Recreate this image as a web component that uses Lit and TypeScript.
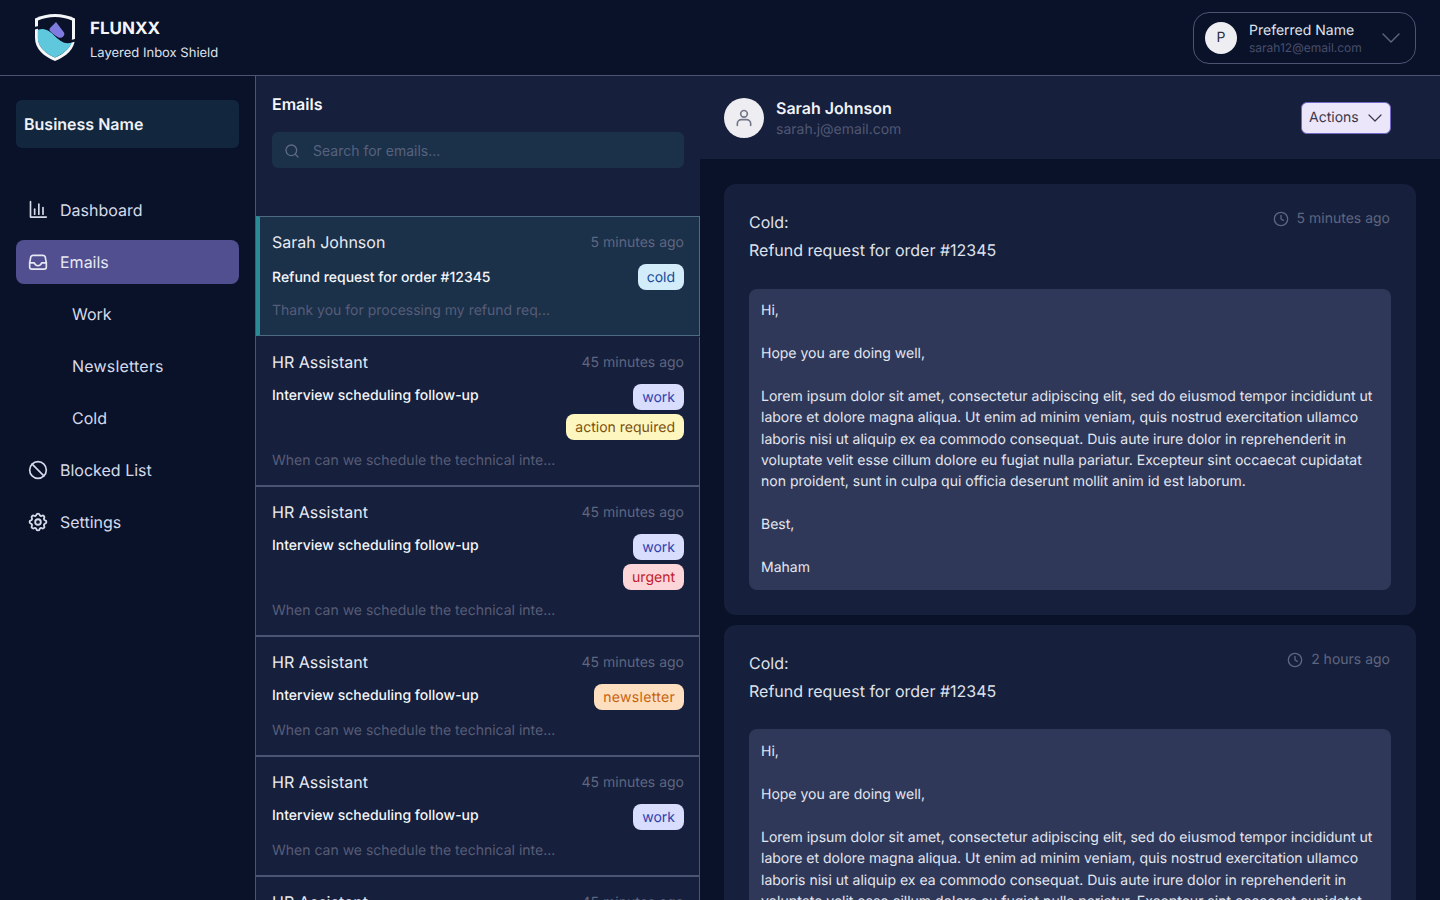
import {css, html, LitElement, svg} from "lit"
import {customElement} from "lit/decorators.js"

const LOREM = `Hi,

Hope you are doing well,

Lorem ipsum dolor sit amet, consectetur adipiscing elit, sed do eiusmod tempor incididunt ut labore et dolore magna aliqua. Ut enim ad minim veniam, quis nostrud exercitation ullamco laboris nisi ut aliquip ex ea commodo consequat. Duis aute irure dolor in reprehenderit in voluptate velit esse cillum dolore eu fugiat nulla pariatur. Excepteur sint occaecat cupidatat non proident, sunt in culpa qui officia deserunt mollit anim id est laborum.

Best,

Maham`

const HR = {
    name: 'HR Assistant',
    time: '45 minutes ago',
    subject: 'Interview scheduling follow-up',
    snippet: 'When can we schedule the technical inte...',
}

const EMAILS = [
    {
        name: 'Sarah Johnson',
        time: '5 minutes ago',
        subject: 'Refund request for order #12345',
        snippet: 'Thank you for processing my refund req...',
        tags: ['cold'],
        selected: true,
    },
    {...HR, tags: ['work', 'action required']},
    {...HR, tags: ['work', 'urgent']},
    {...HR, tags: ['newsletter']},
    {...HR, tags: ['work']},
    {...HR, tags: ['work']},
]

const icon = (size: number, body: unknown) => html`
    <svg width="${size}" height="${size}" viewBox="0 0 24 24" fill="none" stroke="currentColor"
         stroke-width="2" stroke-linecap="round" stroke-linejoin="round">${body}</svg>
`

const ICONS = {
    chart: svg`<path d="M3 2v18.5h19"/><path d="M8 11v6"/><path d="M13 5v12"/><path d="M18 9v8"/>`,
    inbox: svg`<path d="M2 13h5.500c1 3 2.500 3.500 4.500 3.500s3.500-.5 4.500-3.500H22"/><path d="M6 4h12a3 3 0 0 1 2.600 1.600L22 13v5a2.500 2.500 0 0 1-2.500 2.500h-15A2.500 2.500 0 0 1 2 18v-5l1.400-7.400A3 3 0 0 1 6 4z"/>`,
    ban: svg`<circle cx="12" cy="12" r="10"/><path d="M5 5l14 14"/>`,
    gear: svg`<g transform="translate(12 12) scale(1.12) translate(-12 -12)"><path d="M10.325 4.317c.426-1.756 2.924-1.756 3.350 0a1.724 1.724 0 0 0 2.573 1.066c1.543-.94 3.310.826 2.370 2.370a1.724 1.724 0 0 0 1.065 2.572c1.756.426 1.756 2.924 0 3.350a1.724 1.724 0 0 0-1.066 2.573c.94 1.543-.826 3.310-2.370 2.370a1.724 1.724 0 0 0-2.572 1.065c-.426 1.756-2.924 1.756-3.350 0a1.724 1.724 0 0 0-2.573-1.066c-1.543.94-3.310-.826-2.370-2.370a1.724 1.724 0 0 0-1.065-2.572c-1.756-.426-1.756-2.924 0-3.350a1.724 1.724 0 0 0 1.066-2.573c-.94-1.543.826-3.310 2.370-2.370c1 .608 2.296.07 2.572-1.065z"/><circle cx="12" cy="12" r="3"/></g>`,
    search: svg`<circle cx="11" cy="11" r="8"/><path d="M21 21l-4.300-4.300"/>`,
    chevron: svg`<path d="M4 8l8 8 8-8"/>`,
    clock: svg`<circle cx="12" cy="12" r="10"/><path d="M12 6.500V12l3.500 2"/>`,
    user: svg`<circle cx="12" cy="7" r="4"/><path d="M4 21v-2a5 5 0 0 1 5-5h6a5 5 0 0 1 5 5v2"/>`,
}

@customElement("app-root")
export class AppRoot extends LitElement {
    static styles = css`
      :host {
        display: flex;
        flex-direction: column;
        height: 900px;
        overflow: hidden;
        background: #0a1229;
        color: #e3e6f0;
        font-family: Inter, "Liberation Sans", sans-serif;
        text-rendering: geometricPrecision;
      }

      * {
        box-sizing: border-box;
      }

      .topbar {
        flex: none;
        height: 76px;
        display: flex;
        align-items: center;
        justify-content: space-between;
        padding: 0 24px 0 35px;
        border-bottom: 1px solid #4c5473;
      }

      .brand {
        display: flex;
        align-items: center;
        gap: 15px;
      }

      .brand-name {
        font-size: 17px;
        font-weight: 700;
        line-height: 22px;
        padding-top: 4px;
        color: #f5f6fa;
      }

      .brand-sub {
        font-size: 13px;
        line-height: 16px;
        margin-top: 5px;
        color: #dfe2ec;
      }

      .account {
        width: 223px;
        height: 52px;
        display: flex;
        align-items: center;
        padding: 0 12px 0 11px;
        border: 1px solid #4c5473;
        border-radius: 16px;
      }

      .account-avatar {
        width: 32px;
        height: 32px;
        border-radius: 50%;
        background: #eeeef2;
        color: #2c2f3c;
        font-size: 14px;
        display: flex;
        align-items: center;
        justify-content: center;
        margin-right: 12px;
      }

      .account-text {
        flex: 1;
        padding-top: 2px;
      }

      .account-name {
        font-size: 14px;
        line-height: 18px;
        color: #dfe2ec;
      }

      .account-mail {
        font-size: 12px;
        line-height: 16px;
        color: #474e6c;
      }

      .account svg {
        color: #5f6680;
        stroke-width: 1.4;
      }

      .main {
        flex: 1;
        min-height: 0;
        display: flex;
      }

      .sidebar {
        flex: none;
        width: 256px;
        padding: 24px 16px;
        border-right: 1px solid #4c5473;
      }

      .business {
        height: 48px;
        display: flex;
        align-items: center;
        padding: 0 8px;
        border-radius: 6px;
        background: #12263d;
        font-size: 16px;
        font-weight: 600;
        color: #f0f2f7;
      }

      nav {
        margin-top: 40px;
        display: flex;
        flex-direction: column;
        gap: 8px;
      }

      .nav-item {
        height: 44px;
        display: flex;
        align-items: center;
        gap: 12px;
        padding: 0 12px;
        border-radius: 8px;
        font-size: 16px;
        color: #d5daea;
      }

      .nav-item.active {
        background: #514f8f;
        color: #e6e8f4;
      }

      .nav-item.sub {
        padding-left: 56px;
      }

      .wide {
        letter-spacing: 0.2px;
      }

      .list {
        flex: none;
        width: 444px;
        background: #161f3b;
        overflow: hidden;
      }

      .list-head {
        height: 140px;
        padding: 18px 16px 0;
      }

      .list-title {
        font-size: 16px;
        font-weight: 600;
        line-height: 20px;
        color: #f5f6fa;
      }

      .search {
        height: 36px;
        margin-top: 18px;
        display: flex;
        align-items: center;
        gap: 13px;
        padding: 1px 12px 0;
        border-radius: 6px;
        background: #1b3049;
        color: #5f6a84;
      }

      .search svg {
        margin-top: 1px;
      }

      .search input {
        flex: 1;
        border: 0;
        outline: 0;
        padding: 0;
        background: transparent;
        font: inherit;
        font-size: 14px;
      }

      .search input::placeholder {
        color: #57627e;
        opacity: 1;
      }

      .email {
        padding: 13px 15px 14px 16px;
        border-right: 1px solid #4c5473;
        border-bottom: 2px solid #4c5473;
      }

      .email.selected {
        background: #1b3049;
        border-top: 1px solid #4f6a85;
        border-right-color: #4f6a85;
        border-left: 4px solid #2a8a95;
        border-bottom: 1px solid #4f6a85;
        padding-left: 12px;
        margin-bottom: 1px;
      }

      .email-top {
        display: flex;
        justify-content: space-between;
        align-items: center;
        height: 24px;
      }

      .email-name {
        font-size: 16px;
        color: #e8eaf2;
      }

      .email-time {
        font-size: 14px;
        color: #5f6680;
      }

      .email-mid {
        display: flex;
        justify-content: space-between;
        align-items: flex-start;
        margin-top: 10px;
      }

      .email-subject {
        font-size: 14px;
        font-weight: 500;
        line-height: 21px;
        margin-top: 1px;
        color: #f5f6fa;
      }

      .selected .email-subject {
        margin-top: 2.500px;
      }

      .tags {
        display: flex;
        flex-direction: column;
        align-items: flex-end;
        gap: 4px;
      }

      .tag {
        height: 26px;
        display: flex;
        align-items: center;
        padding: 0 9px;
        border-radius: 8px;
        font-size: 14px;
      }

      .tag-cold {
        background: #d3ecf9;
        color: #16499a;
      }

      .tag-work {
        background: #d8dcfd;
        color: #2d3fae;
      }

      .tag-action {
        background: #fef6bf;
        color: #7a5010;
      }

      .tag-urgent {
        background: #fcd5d8;
        color: #c2202a;
      }

      .tag-newsletter {
        background: #fddfc0;
        color: #c7620f;
        letter-spacing: 0.3px;
      }

      .email-snippet {
        font-size: 14px;
        line-height: 21px;
        margin-top: 10px;
        color: #565d78;
      }

      .detail {
        flex: 1;
        min-width: 0;
        display: flex;
        flex-direction: column;
      }

      .detail-head {
        flex: none;
        height: 83px;
        display: flex;
        align-items: center;
        justify-content: space-between;
        padding: 0 49px 0 24px;
        background: #161f3b;
      }

      .sender {
        display: flex;
        align-items: center;
        gap: 12px;
      }

      .sender-avatar {
        width: 40px;
        height: 40px;
        border-radius: 50%;
        background: #eeeef2;
        color: #74778a;
        display: flex;
        align-items: center;
        justify-content: center;
      }

      .sender-text {
        padding-top: 1px;
      }

      .sender-name {
        font-size: 16px;
        font-weight: 600;
        line-height: 22px;
        color: #f0f2f7;
      }

      .sender-mail {
        font-size: 14px;
        line-height: 20px;
        margin-top: 1px;
        color: #505873;
      }

      .actions {
        width: 90px;
        height: 32px;
        display: flex;
        align-items: center;
        justify-content: space-between;
        padding: 0 6px 0 7px;
        border: 1px solid #7068c4;
        border-radius: 6px;
        background: #ece6fb;
        color: #38384a;
        font-size: 14px;
      }

      .actions svg {
        stroke-width: 1.6;
      }

      .thread {
        flex: 1;
        min-height: 0;
        overflow: hidden;
        display: flex;
        flex-direction: column;
        gap: 10px;
        padding: 25px 24px 0;
      }

      .message {
        flex: none;
        padding: 24px 25px 25px;
        border-radius: 12px;
        background: #161f3b;
      }

      .message-head {
        display: flex;
        justify-content: space-between;
        align-items: flex-start;
        height: 55.500px;
      }

      .message-title {
        font-size: 16px;
        line-height: 28px;
        color: #dfe2ec;
      }

      .message-time {
        display: flex;
        align-items: center;
        gap: 8px;
        margin-right: 1px;
        padding-top: 1px;
        font-size: 14px;
        line-height: 20px;
        color: #5f6680;
      }

      .message-body {
        margin-top: 25px;
        padding: 11.500px 12px;
        border-radius: 8px;
        background: #2f3858;
        font-size: 14px;
        line-height: 21.420px;
        color: #e3e6f0;
        white-space: pre-line;
      }
    `

    private logo() {
        return html`
            <svg width="40" height="47" viewBox="0 0 40 47">
                <path fill="#f4f6f8" d="M20 0C27 0 34 1.500 40 4.500V24C40 35 31 42.500 20 47C9 42.500 0 35 0 24V4.500C6 1.500 13 0 20 0Z"/>
                <path fill="#0a1229" d="M20 3C26 3 32 4.300 37 6.500V24C37 33.500 29 39.500 20 43.600C11 39.500 3 33.500 3 24V6.500C8 4.300 14 3 20 3Z"/>
                <path fill="#5fc8dc" d="M2.700 16C10 13 15 17 20 22C25 27 30 31 37 28.500C34 36 27 40 20 43.600C11 39.500 3 33.500 2.700 24Z"/>
                <path fill="none" stroke="#0a1229" stroke-width="2.500" d="M-1 14.500C9 11 15 15 20 20.500C25 26 31 29.500 41 26"/>
                <path fill="#7f7be0" d="M21 8L29 18.500C30.500 21.500 27 25 23.500 23.500C20 21.500 17 19.500 15 17C14 16 14.500 14.500 15.500 13.500Z"/>
            </svg>
        `
    }

    private navItem(label: string, iconBody: unknown, active = false) {
        return html`
            <div class="nav-item ${active ? 'active' : ''}">${icon(20, iconBody)}<span>${label}</span></div>
        `
    }

    private message(time: string) {
        return html`
            <article class="message">
                <div class="message-head">
                    <div class="message-title">Cold:<br>Refund request for order #12345</div>
                    <div class="message-time">${icon(16, ICONS.clock)}<span>${time}</span></div>
                </div>
                <div class="message-body">${LOREM}</div>
            </article>
        `
    }

    render() {
        return html`
            <header class="topbar">
                <div class="brand">
                    ${this.logo()}
                    <div>
                        <div class="brand-name">FLUNXX</div>
                        <div class="brand-sub">Layered Inbox Shield</div>
                    </div>
                </div>
                <div class="account">
                    <div class="account-avatar">P</div>
                    <div class="account-text">
                        <div class="account-name">Preferred Name</div>
                        <div class="account-mail">sarah12@email.com</div>
                    </div>
                    ${icon(24, ICONS.chevron)}
                </div>
            </header>
            <div class="main">
                <aside class="sidebar">
                    <div class="business">Business Name</div>
                    <nav>
                        ${this.navItem('Dashboard', ICONS.chart)}
                        ${this.navItem('Emails', ICONS.inbox, true)}
                        <div class="nav-item sub">Work</div>
                        <div class="nav-item sub wide">Newsletters</div>
                        <div class="nav-item sub">Cold</div>
                        ${this.navItem('Blocked List', ICONS.ban)}
                        ${this.navItem('Settings', ICONS.gear)}
                    </nav>
                </aside>
                <section class="list">
                    <div class="list-head">
                        <div class="list-title">Emails</div>
                        <label class="search">
                            ${icon(16, ICONS.search)}
                            <input placeholder="Search for emails...">
                        </label>
                    </div>
                    ${EMAILS.map(e => html`
                        <div class="email ${e.selected ? 'selected' : ''}">
                            <div class="email-top">
                                <span class="email-name">${e.name}</span>
                                <span class="email-time">${e.time}</span>
                            </div>
                            <div class="email-mid">
                                <div class="email-subject">${e.subject}</div>
                                <div class="tags">
                                    ${e.tags.map(t => html`<span class="tag tag-${t.split(' ')[0]}">${t}</span>`)}
                                </div>
                            </div>
                            <div class="email-snippet">${e.snippet}</div>
                        </div>
                    `)}
                </section>
                <section class="detail">
                    <div class="detail-head">
                        <div class="sender">
                            <div class="sender-avatar">${icon(20, ICONS.user)}</div>
                            <div class="sender-text">
                                <div class="sender-name">Sarah Johnson</div>
                                <div class="sender-mail">sarah.j@email.com</div>
                            </div>
                        </div>
                        <div class="actions"><span>Actions</span>${icon(18, ICONS.chevron)}</div>
                    </div>
                    <div class="thread">
                        ${this.message('5 minutes ago')}
                        ${this.message('2 hours ago')}
                    </div>
                </section>
            </div>
        `
    }
}
